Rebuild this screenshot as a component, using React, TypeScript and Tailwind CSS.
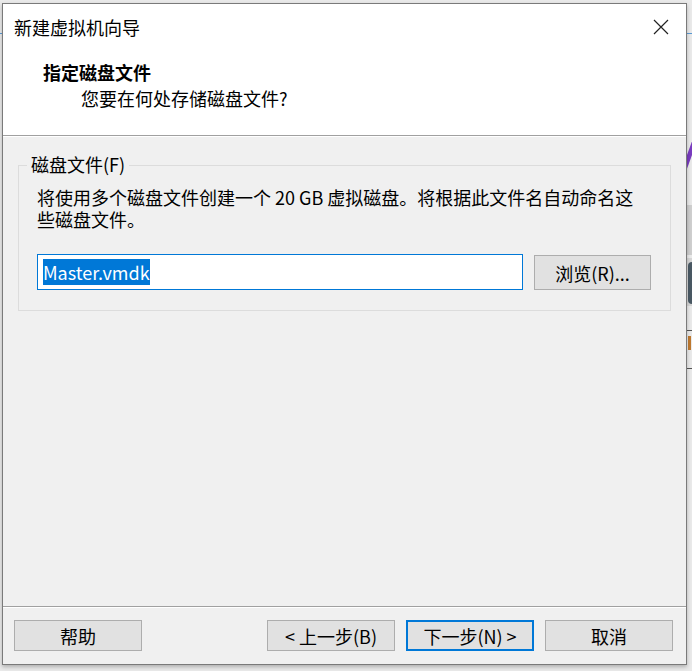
export default function App() {
  return (
    <div className="relative w-[692px] h-[671px] overflow-hidden bg-[#eaeaea] font-['Noto_Sans_CJK_SC',sans-serif] text-[18px] leading-[22px] text-black">
      {/* desktop fragments behind the dialog */}
      <div className="absolute left-0 top-[33px] w-[692px] h-[1px] bg-[#5b9bd5]" />
      <div className="absolute left-[687px] top-[140px] w-[5px] h-[30px] bg-[#7a3cc0] skew-x-[-20deg]" />
      <div className="absolute left-[687px] top-[205px] w-[5px] h-[50px] bg-[#cfcfcf]" />
      <div className="absolute left-[687px] top-[258px] w-[5px] h-[48px] bg-[#d6d6d6]" />
      <div className="absolute left-[688px] top-[262px] w-[4px] h-[42px] rounded-l-full bg-[#4a5964]" />
      <div className="absolute left-[687px] top-[330px] w-[5px] h-[1px] bg-[#555]" />
      <div className="absolute left-[688px] top-[336px] w-[3px] h-[14px] bg-[#c07a30]" />
      <div className="absolute left-[687px] top-[368px] w-[5px] h-[1px] bg-[#555]" />

      {/* dialog window */}
      <div className="relative ml-[2px] mt-[3px] w-[685px] h-[662px] border border-[#7a7a7a] bg-[#f0f0f0] flex flex-col shadow-[0_2px_4px_rgba(0,0,0,0.25)]">
        {/* header */}
        <div className="h-[131px] bg-white flex flex-col">
          <div className="h-[46px] flex items-center justify-between pl-[11px] pr-[17px]">
            <span className="leading-[24px]">新建虚拟机向导</span>
            <svg width="16" height="16" viewBox="0 0 16 16" className="text-[#222]">
              <path d="M1 1 L15 15 M15 1 L1 15" stroke="currentColor" strokeWidth="1.2" fill="none" />
            </svg>
          </div>
          <div className="mt-[10px] pl-[40px] font-bold leading-[24px]">指定磁盘文件</div>
          <div className="mt-[2px] pl-[78px] leading-[24px]">您要在何处存储磁盘文件?</div>
        </div>
        <div className="h-[1px] bg-[#a0a0a0]" />
        <div className="h-[1px] bg-white" />

        {/* body */}
        <div className="flex-1 px-[15px] pt-[28px]">
          <div className="relative border border-[#dcdcdc] pl-[18px] pt-[20px] pb-[20px]">
            <span className="absolute left-[8px] top-[-13px] px-[4px] bg-[#f0f0f0] leading-[22px]">磁盘文件(F)</span>
            <p className="whitespace-nowrap">
              将使用多个磁盘文件创建一个 20 GB 虚拟磁盘。将根据此文件名自动命名这
            </p>
            <p className="whitespace-nowrap">些磁盘文件。</p>
            <div className="mt-[24px] flex gap-[11px]">
              <div className="w-[486px] h-[36px] border border-[#0078d7] bg-white flex items-center pl-[5px]">
                <span className="bg-[#0078d7] text-white leading-[26px]">Master.vmdk</span>
              </div>
              <button className="mt-[1px] w-[117px] h-[35px] border border-[#adadad] bg-[#e1e1e1] flex items-center justify-center leading-[22px]">
                浏览(R)...
              </button>
            </div>
          </div>
        </div>

        <div className="h-[1px] bg-[#a0a0a0]" />
        <div className="h-[1px] bg-white" />

        {/* footer */}
        <div className="h-[56px] pt-[12px] pl-[11px] pr-[13px] flex items-start">
          <button className="w-[128px] h-[31px] border border-[#adadad] bg-[#e1e1e1] flex items-center justify-center leading-[22px]">
            帮助
          </button>
          <div className="ml-auto flex gap-[11px]">
            <button className="w-[128px] h-[31px] border border-[#adadad] bg-[#e1e1e1] flex items-center justify-center leading-[22px]">
              &lt; 上一步(B)
            </button>
            <button className="w-[128px] h-[31px] border-2 border-[#0078d7] bg-[#e1e1e1] flex items-center justify-center leading-[22px]">
              下一步(N) &gt;
            </button>
            <button className="w-[128px] h-[31px] border border-[#adadad] bg-[#e1e1e1] flex items-center justify-center leading-[22px]">
              取消
            </button>
          </div>
        </div>
      </div>
    </div>
  );
}
